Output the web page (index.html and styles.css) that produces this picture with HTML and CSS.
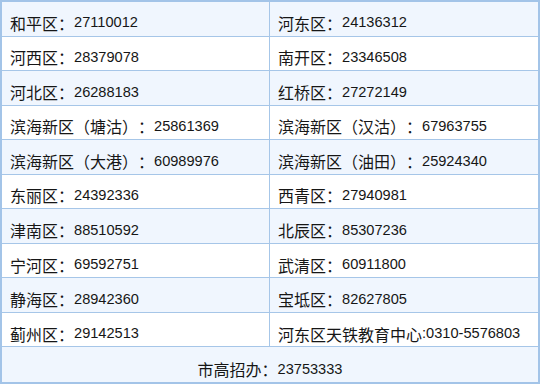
FILE: index.html
```html
<!DOCTYPE html>
<html lang="zh">
<head>
<meta charset="utf-8">
<link rel="stylesheet" href="styles.css">
</head>
<body>
<div class="table">
  <div class="cell odd l">和平区：<span class="n">27110012</span></div>
  <div class="cell odd r">河东区：<span class="n">24136312</span></div>
  <div class="cell l">河西区：<span class="n">28379078</span></div>
  <div class="cell r">南开区：<span class="n">23346508</span></div>
  <div class="cell odd l">河北区：<span class="n">26288183</span></div>
  <div class="cell odd r">红桥区：<span class="n">27272149</span></div>
  <div class="cell l">滨海新区（塘沽）：<span class="n">25861369</span></div>
  <div class="cell r">滨海新区（汉沽）：<span class="n">67963755</span></div>
  <div class="cell odd l">滨海新区（大港）：<span class="n">60989976</span></div>
  <div class="cell odd r">滨海新区（油田）：<span class="n">25924340</span></div>
  <div class="cell l">东丽区：<span class="n">24392336</span></div>
  <div class="cell r">西青区：<span class="n">27940981</span></div>
  <div class="cell odd l">津南区：<span class="n">88510592</span></div>
  <div class="cell odd r">北辰区：<span class="n">85307236</span></div>
  <div class="cell l">宁河区：<span class="n">69592751</span></div>
  <div class="cell r">武清区：<span class="n">60911800</span></div>
  <div class="cell odd l">静海区：<span class="n">28942360</span></div>
  <div class="cell odd r">宝坻区：<span class="n">82627805</span></div>
  <div class="cell l">蓟州区：<span class="n">29142513</span></div>
  <div class="cell r">河东区天铁教育中心<span class="n">:0310-5576803</span></div>
  <div class="cell odd foot">市高招办：<span class="n">23753333</span></div>
</div>
</body>
</html>
```

FILE: styles.css
```css
html, body {
  margin: 0;
  padding: 0;
  background: #ffffff;
}
.table {
  box-sizing: border-box;
  width: 540px;
  height: 384px;
  border: 2px solid #a3c4e8;
  display: grid;
  grid-template-columns: 1fr 1fr;
  grid-template-rows: repeat(11, 1fr);
  font-family: "Noto Sans CJK SC", sans-serif;
  font-size: 16px;
  color: #161616;
  text-spacing-trim: space-all;
}
.cell {
  display: flex;
  align-items: center;
  padding: 8px 0 0 8px;
  border-bottom: 1px solid #a6c6e8;
  background: #ffffff;
  white-space: nowrap;
  line-height: 1;
}
.cell.odd {
  background: #f0f6fe;
}
.cell.l {
  border-right: 1px solid #a6c6e8;
}
.cell.r {
  padding-left: 8px;
}
.cell.foot {
  grid-column: 1 / 3;
  justify-content: center;
  border-bottom: none;
  padding-left: 0;
  padding-top: 9px;
}
.n {
  font-family: "Liberation Sans", sans-serif;
  font-size: 14.6px;
}
```
